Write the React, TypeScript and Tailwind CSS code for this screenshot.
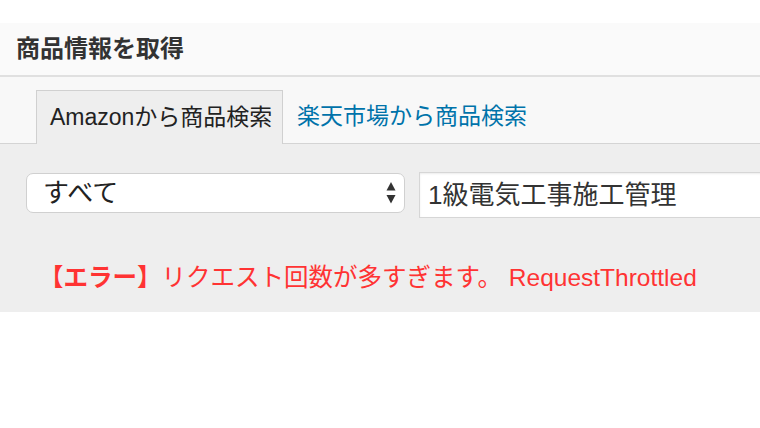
import React from "react";

function SelectArrows() {
    return (
        <svg className="w-[10px] h-[23px]" viewBox="0 0 10 23" aria-hidden="true">
            <path d="M5 0 L9.5 8.5 L0.5 8.5 Z" fill="#333" />
            <path d="M0.5 13 L9.5 13 L5 21.5 Z" fill="#333" />
        </svg>
    );
}

export default function App() {
    return (
        <div className="w-[760px] h-[428px] bg-white overflow-hidden font-['Liberation_Sans','Noto_Sans_CJK_JP',sans-serif]">
            <div className="h-[23px]" />
            <div className="h-[54px] bg-[#fafafa] border-b-2 border-[#e0e0e0] flex items-center pl-4">
                <h2 className="text-[24px] leading-none font-semibold text-[#333] whitespace-nowrap">商品情報を取得</h2>
            </div>

            <div className="bg-[#f8f8f8] pt-3 pl-9 flex items-end border-b border-[#d4d4d4]">
                <div className="-mb-px h-[54px] w-[247px] shrink-0 flex items-center px-[13px] bg-[#eeeeee] border border-b-0 border-[#d0d0d0] text-[23px] text-[#222] whitespace-nowrap">
                    Amazonから商品検索
                </div>
                <a className="h-[54px] shrink-0 flex items-center px-[14px] text-[23px] text-[#0073aa] whitespace-nowrap">
                    楽天市場から商品検索
                </a>
            </div>

            <div className="bg-[#eeeeee] h-[168px] pt-[28px] pl-[26px]">
                <div className="flex items-start gap-[14px]">
                    <div className="mt-px w-[379px] shrink-0 h-10 bg-white border border-[#d0d0d0] rounded-[7px] flex items-center justify-between pl-4 pr-2">
                        <span className="text-[26px] text-[#222] whitespace-nowrap">すべて</span>
                        <SelectArrows />
                    </div>
                    <div className="w-[420px] shrink-0 h-[46px] bg-white border border-[#d6d6d6] shadow-[inset_0_1px_2px_rgba(0,0,0,0.08)] flex items-center pl-2">
                        <span className="text-[26px] text-[#333] whitespace-nowrap">1級電気工事施工管理</span>
                    </div>
                </div>
                <p className="mt-[44px] ml-[13px] text-[24.5px] leading-8 text-[#ff3333] whitespace-nowrap">
                    <span className="font-bold">【エラー】</span>リクエスト回数が多すぎます。 RequestThrottled
                </p>
            </div>
        </div>
    );
}
